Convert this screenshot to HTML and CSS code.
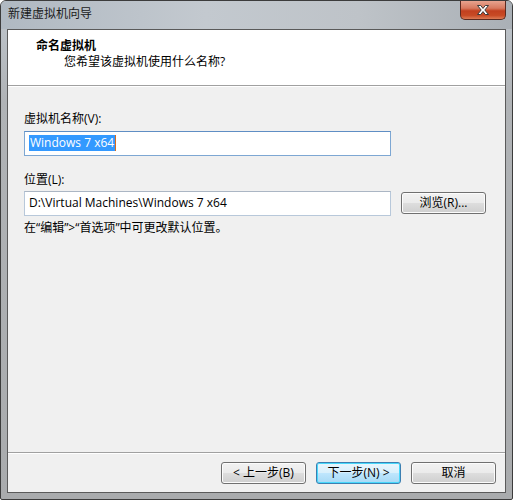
FILE: index.html
```html
<!DOCTYPE html>
<html lang="zh-CN">
<head>
<meta charset="utf-8">
<title>新建虚拟机向导</title>
<link rel="stylesheet" href="styles.css">
</head>
<body>
<div class="window">
  <div class="titlebar">
    <span class="title">新建虚拟机向导</span>
    <div class="close">
      <svg width="16" height="12" viewBox="0 0 16 12">
        <path d="M2.5 1.5h3.2L8 4.4l2.3-2.9h3.2L9.8 6l3.7 4.5h-3.2L8 7.6l-2.3 2.9H2.5L6.2 6z" fill="#fff" stroke="#3b3b3b" stroke-width="1" stroke-linejoin="round"/>
      </svg>
    </div>
  </div>
  <div class="client">
    <div class="header">
      <div class="h-title">命名虚拟机</div>
      <div class="h-sub">您希望该虚拟机使用什么名称?</div>
    </div>
    <div class="body">
      <div class="label first">虚拟机名称(V):</div>
      <div class="field focused"><span class="sel">Windows 7 x64</span><span class="caret"></span></div>
      <div class="label second">位置(L):</div>
      <div class="row">
        <div class="field">D:\Virtual Machines\Windows 7 x64</div>
        <div class="btn browse">浏览(R)...</div>
      </div>
      <div class="note">在“编辑”&gt;“首选项”中可更改默认位置。</div>
    </div>
    <div class="footer">
      <div class="btn">&lt; 上一步(B)</div>
      <div class="btn default">下一步(N) &gt;</div>
      <div class="btn">取消</div>
    </div>
  </div>
</div>
</body>
</html>
```
FILE: styles.css
```css
html, body {
  margin: 0;
  padding: 0;
  background: #fff;
}
body {
  font-family: "Open Sans", "Noto Sans CJK SC", sans-serif;
  font-size: 12px;
  color: #000;
}
.window {
  width: 513px;
  height: 500px;
  box-sizing: border-box;
  border: 1px solid #3c3c3c;
  border-radius: 6px 6px 2px 2px;
  background: linear-gradient(180deg, #c4cad0 0px, #bbc1c7 28px, #b0b3b6 100px, #a9abad 100%);
  display: flex;
  flex-direction: column;
  overflow: hidden;
}
.titlebar {
  height: 28px;
  display: flex;
  align-items: flex-start;
  justify-content: space-between;
  background: linear-gradient(90deg, #b0b9c2 0%, #c3c9cf 40%, #bec3c8 70%, #aab0b6 100%);
}
.title {
  margin: 5px 0 0 7px;
  line-height: 16px;
  color: #1a1a1a;
}
.close {
  width: 46px;
  height: 19px;
  margin-right: 6px;
  box-sizing: border-box;
  border: 1px solid #5b2a20;
  border-top: none;
  border-radius: 0 0 5px 5px;
  background: linear-gradient(180deg, #e7a38f 0%, #d7795f 40%, #c2401f 55%, #c84a25 80%, #dc7b55 100%);
  display: flex;
  align-items: center;
  justify-content: center;
}
.client {
  flex: 1;
  margin: 0 6px 6px 6px;
  border: 1px solid #5a5a5a;
  background: #f0f0f0;
  display: flex;
  flex-direction: column;
}
.header {
  height: 56px;
  background: #fff;
  border-bottom: 1px solid #a0a0a0;
  box-shadow: 0 1px 0 #fff;
  box-sizing: border-box;
  padding: 8px 0 0 28px;
  line-height: 16px;
}
.h-title {
  font-weight: bold;
}
.h-sub {
  padding-left: 28px;
}
.body {
  flex: 1;
  padding: 25px 0 0 16px;
  display: flex;
  flex-direction: column;
  align-items: flex-start;
  line-height: 16px;
}
.label.first { margin-bottom: 4px; }
.label.second { margin-top: 16px; margin-bottom: 3px; }
.field {
  width: 367px;
  height: 25px;
  box-sizing: border-box;
  border: 1px solid #b8c8da;
  border-top-color: #abb6c4;
  background: #fff;
  padding: 3px 0 0 4px;
  display: flex;
  align-items: flex-start;
  white-space: nowrap;
}
.field.focused {
  border-color: #7da7d3;
  border-top-color: #5f8ec4;
}
.sel {
  background: #3399ff;
  color: #fff;
  padding: 0 1px;
}
.caret {
  width: 1px;
  height: 16px;
  background: #d86b1c;
}
.row {
  display: flex;
  align-items: flex-start;
  gap: 10px;
}
.btn {
  width: 85px;
  height: 22px;
  box-sizing: border-box;
  border: 1px solid #707070;
  border-radius: 3px;
  background: linear-gradient(180deg, #f2f2f2 0%, #ebebeb 48%, #dddddd 52%, #cfcfcf 100%);
  box-shadow: inset 0 0 0 1px #fcfcfc;
  display: flex;
  align-items: center;
  justify-content: center;
  line-height: 16px;
  white-space: nowrap;
}
.browse {
  margin-top: 1px;
}
.btn.default {
  border-color: #3c7fb1;
  box-shadow: inset 0 0 0 1px #48d8fb;
  background: linear-gradient(180deg, #eaf6fd 0%, #d9f0fc 48%, #bee6fd 52%, #a7d9f5 100%);
}
.note {
  margin-top: 4px;
}
.footer {
  border-top: 1px solid #a0a0a0;
  box-shadow: inset 0 1px 0 #fff;
  height: 40px;
  box-sizing: border-box;
  padding: 9px 9px 0 0;
  display: flex;
  justify-content: flex-end;
  gap: 10px;
}
```
